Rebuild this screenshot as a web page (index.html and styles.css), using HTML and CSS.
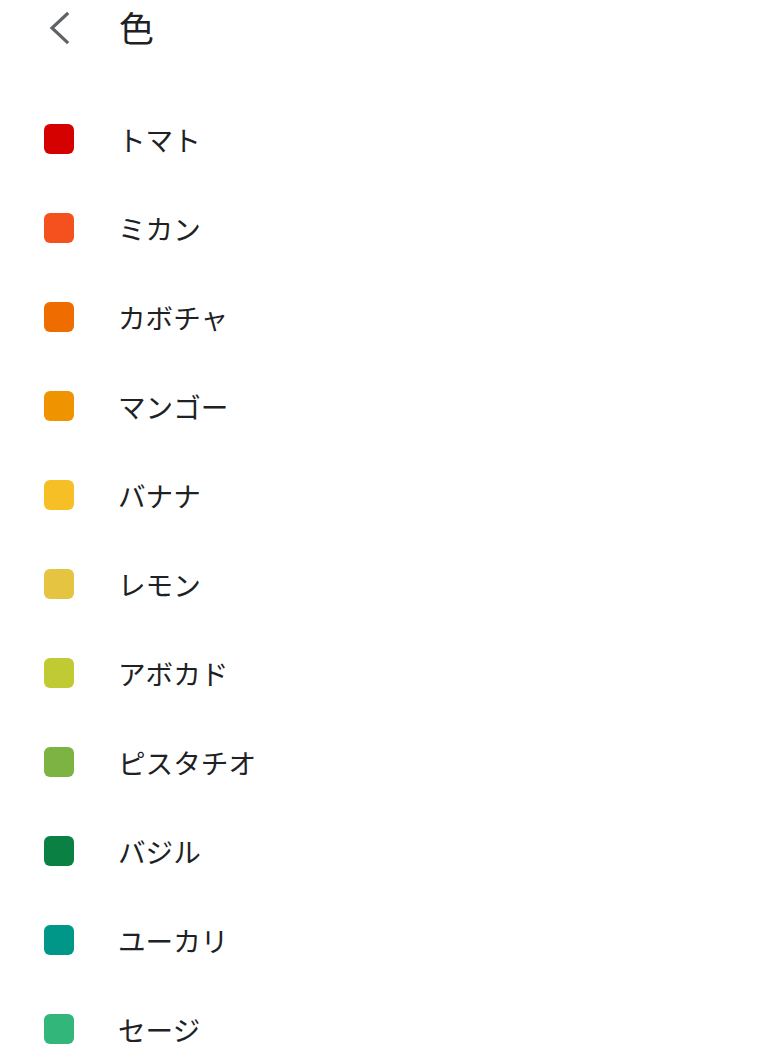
FILE: index.html
```html
<!DOCTYPE html>
<html lang="ja">
<head>
<meta charset="UTF-8">
<meta name="viewport" content="width=device-width, initial-scale=1.0">
<title>色</title>
<link rel="stylesheet" href="styles.css">
</head>
<body>

<div class="header">
    <button class="back" aria-label="戻る">
        <svg width="24" height="34" viewBox="0 0 24 34">
            <polyline points="19,4 4,18 19,32" fill="none" stroke="#5f6368" stroke-width="3.2" stroke-linecap="square" stroke-linejoin="miter"/>
        </svg>
    </button>
    <h1>色</h1>
</div>

<ul class="colors">
    <li><span class="swatch tomato"></span>トマト</li>
    <li><span class="swatch tangerine"></span>ミカン</li>
    <li><span class="swatch pumpkin"></span>カボチャ</li>
    <li><span class="swatch mango"></span>マンゴー</li>
    <li><span class="swatch banana"></span>バナナ</li>
    <li><span class="swatch citron"></span>レモン</li>
    <li><span class="swatch avocado"></span>アボカド</li>
    <li><span class="swatch pistachio"></span>ピスタチオ</li>
    <li><span class="swatch basil"></span>バジル</li>
    <li><span class="swatch eucalyptus"></span>ユーカリ</li>
    <li><span class="swatch sage"></span>セージ</li>
</ul>

</body>
</html>
```

FILE: styles.css
```css
body {
    margin: 0;
    font-family: "Noto Sans CJK JP", "Noto Sans", sans-serif;
    background-color: #fff;
    color: #202124;
}

.header {
    display: flex;
    align-items: center;
    height: 54px;
}

.back {
    display: flex;
    align-items: center;
    justify-content: center;
    width: 24px;
    height: 34px;
    margin-left: 48px;
    padding: 0;
    border: none;
    background: none;
}

h1 {
    margin: 0 0 0 47px;
    font-size: 35px;
    font-weight: 400;
    line-height: 54px;
}

.colors {
    list-style-type: none;
    margin: 0;
    padding: 40px 0 0 0;
}

.colors li {
    display: flex;
    align-items: center;
    height: 89px;
    padding-left: 44px;
    font-size: 27.6px;
}

.swatch {
    width: 30px;
    height: 30px;
    border-radius: 6px;
    margin-right: 44px;
}

.tomato { background-color: #d50000; }
.tangerine { background-color: #f4511e; }
.pumpkin { background-color: #ef6c00; }
.mango { background-color: #f09300; }
.banana { background-color: #f6bf26; }
.citron { background-color: #e4c441; }
.avocado { background-color: #c0ca33; }
.pistachio { background-color: #7cb342; }
.basil { background-color: #0b8043; }
.eucalyptus { background-color: #009688; }
.sage { background-color: #33b679; }
```
